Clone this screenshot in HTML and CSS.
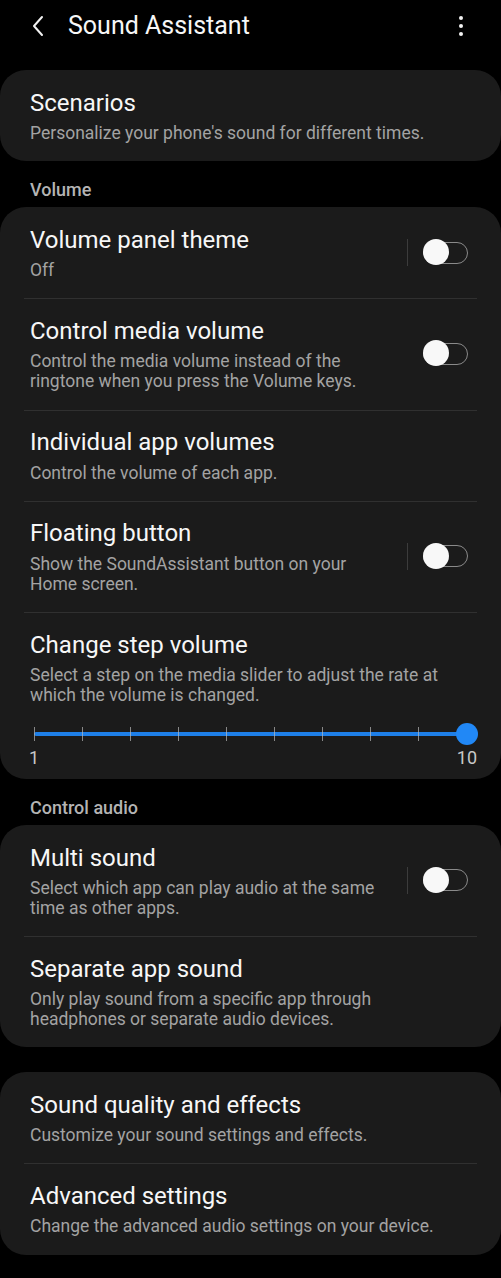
FILE: index.html
```html
<!DOCTYPE html>
<html lang="en">
<head>
<meta charset="utf-8">
<title>Sound Assistant</title>
<link rel="stylesheet" href="styles.css">
</head>
<body>
<div class="screen">
  <header class="appbar">
    <svg class="back" width="14" height="22" viewBox="0 0 14 22"><path d="M11 2 L3 11 L11 20" fill="none" stroke="#f2f2f2" stroke-width="2" stroke-linecap="round" stroke-linejoin="round"/></svg>
    <h1 class="title">Sound Assistant</h1>
    <div class="kebab"><span></span><span></span><span></span></div>
  </header>

  <section class="card">
    <div class="row">
      <div class="text">
        <div class="t">Scenarios</div>
        <div class="s">Personalize your phone's sound for different times.</div>
      </div>
    </div>
  </section>

  <div class="section-label">Volume</div>
  <section class="card">
    <div class="row">
      <div class="text">
        <div class="t">Volume panel theme</div>
        <div class="s">Off</div>
      </div>
      <div class="ctrl"><span class="vline"></span><span class="switch"><span class="knob"></span></span></div>
    </div>
    <div class="row">
      <div class="text">
        <div class="t">Control media volume</div>
        <div class="s">Control the media volume instead of the ringtone when you press the Volume keys.</div>
      </div>
      <div class="ctrl"><span class="vline hidden"></span><span class="switch"><span class="knob"></span></span></div>
    </div>
    <div class="row">
      <div class="text">
        <div class="t">Individual app volumes</div>
        <div class="s">Control the volume of each app.</div>
      </div>
    </div>
    <div class="row">
      <div class="text">
        <div class="t">Floating button</div>
        <div class="s">Show the SoundAssistant button on your Home screen.</div>
      </div>
      <div class="ctrl"><span class="vline"></span><span class="switch"><span class="knob"></span></span></div>
    </div>
    <div class="row row-slider">
      <div class="text">
        <div class="t">Change step volume</div>
        <div class="s">Select a step on the media slider to adjust the rate at which the volume is changed.</div>
        <div class="slider">
          <div class="track">
            <span class="tick"></span><span class="tick"></span><span class="tick"></span><span class="tick"></span><span class="tick"></span>
            <span class="tick"></span><span class="tick"></span><span class="tick"></span><span class="tick"></span><span class="tick"></span>
            <span class="thumb"></span>
          </div>
          <div class="labels"><span>1</span><span>10</span></div>
        </div>
      </div>
    </div>
  </section>

  <div class="section-label">Control audio</div>
  <section class="card">
    <div class="row">
      <div class="text">
        <div class="t">Multi sound</div>
        <div class="s">Select which app can play audio at the same time as other apps.</div>
      </div>
      <div class="ctrl"><span class="vline"></span><span class="switch"><span class="knob"></span></span></div>
    </div>
    <div class="row">
      <div class="text">
        <div class="t">Separate app sound</div>
        <div class="s">Only play sound from a specific app through headphones or separate audio devices.</div>
      </div>
    </div>
  </section>

  <section class="card card-gap">
    <div class="row">
      <div class="text">
        <div class="t">Sound quality and effects</div>
        <div class="s">Customize your sound settings and effects.</div>
      </div>
    </div>
    <div class="row">
      <div class="text">
        <div class="t">Advanced settings</div>
        <div class="s">Change the advanced audio settings on your device.</div>
      </div>
    </div>
  </section>
</div>
</body>
</html>
```
FILE: styles.css
```css
html, body {
  margin: 0;
  padding: 0;
  background: #000;
}
body {
  font-family: Roboto, "Noto Sans", "Liberation Sans", sans-serif;
  color: #f7f7f7;
}
.screen {
  width: 501px;
  display: flex;
  flex-direction: column;
}
.appbar {
  height: 70px;
  display: flex;
  align-items: flex-start;
  box-sizing: border-box;
  padding-top: 11px;
}
.back {
  margin-left: 31px;
  margin-top: 4px;
}
.title {
  margin: 0 0 0 23px;
  font-weight: 400;
  font-size: 25px;
  line-height: 30px;
  color: #f7f7f7;
  flex: 1;
}
.kebab {
  display: flex;
  flex-direction: column;
  gap: 4px;
  margin-right: 38px;
  margin-top: 5px;
}
.kebab span {
  width: 4px;
  height: 4px;
  border-radius: 50%;
  background: #f2f2f2;
}
.card {
  background: #1b1b1b;
  border-radius: 26px;
  display: flex;
  flex-direction: column;
}
.card-gap {
  margin-top: 25px;
}
.section-label {
  font-size: 18px;
  line-height: 22px;
  color: #b4b4b4;
  padding: 18px 0 6px 30px;
  font-weight: 500;
}
.row {
  display: flex;
  align-items: center;
  position: relative;
  padding: 0 33px 0 30px;
}
.row + .row::before {
  content: "";
  position: absolute;
  left: 24px;
  right: 24px;
  top: 0;
  height: 1px;
  background: #303030;
}
.text {
  flex: 1;
  padding: 18.8px 0 18.2px;
  min-width: 0;
}
.t {
  font-size: 24px;
  line-height: 28px;
  color: #f7f7f7;
}
.s {
  font-size: 17.5px;
  line-height: 20px;
  color: #a3a3a3;
  margin-top: 6.2px;
  padding-right: 14px;
}
.ctrl {
  display: flex;
  align-items: center;
  margin-left: 10px;
}
.vline {
  width: 1px;
  height: 27px;
  background: #3c3c3c;
  margin-right: 15px;
}
.vline.hidden {
  visibility: hidden;
}
.switch {
  position: relative;
  width: 45px;
  height: 22px;
  box-sizing: border-box;
  border: 1.5px solid #8a8a8a;
  border-radius: 11px;
}
.knob {
  position: absolute;
  left: -1.5px;
  top: -3.5px;
  width: 26px;
  height: 26px;
  border-radius: 50%;
  background: #f8f8f8;
}
.row-slider .text {
  padding-bottom: 11px;
}
.slider {
  margin-top: 27px;
  padding: 0 1px 0 4px;
}
.track {
  position: relative;
  height: 4px;
  background: #1e7fe8;
  border-radius: 2px;
  display: flex;
  justify-content: space-between;
  align-items: center;
}
.tick {
  width: 1px;
  height: 14px;
  background: #b8b8b8;
  opacity: 0.7;
}
.thumb {
  position: absolute;
  right: -11px;
  top: -9px;
  width: 22px;
  height: 22px;
  border-radius: 50%;
  background: #2188f6;
}
.labels {
  display: flex;
  justify-content: space-between;
  font-size: 18px;
  line-height: 20px;
  color: #c8c8c8;
  margin-top: 12px;
  margin-left: -5px;
  margin-right: -10px;
}
```
